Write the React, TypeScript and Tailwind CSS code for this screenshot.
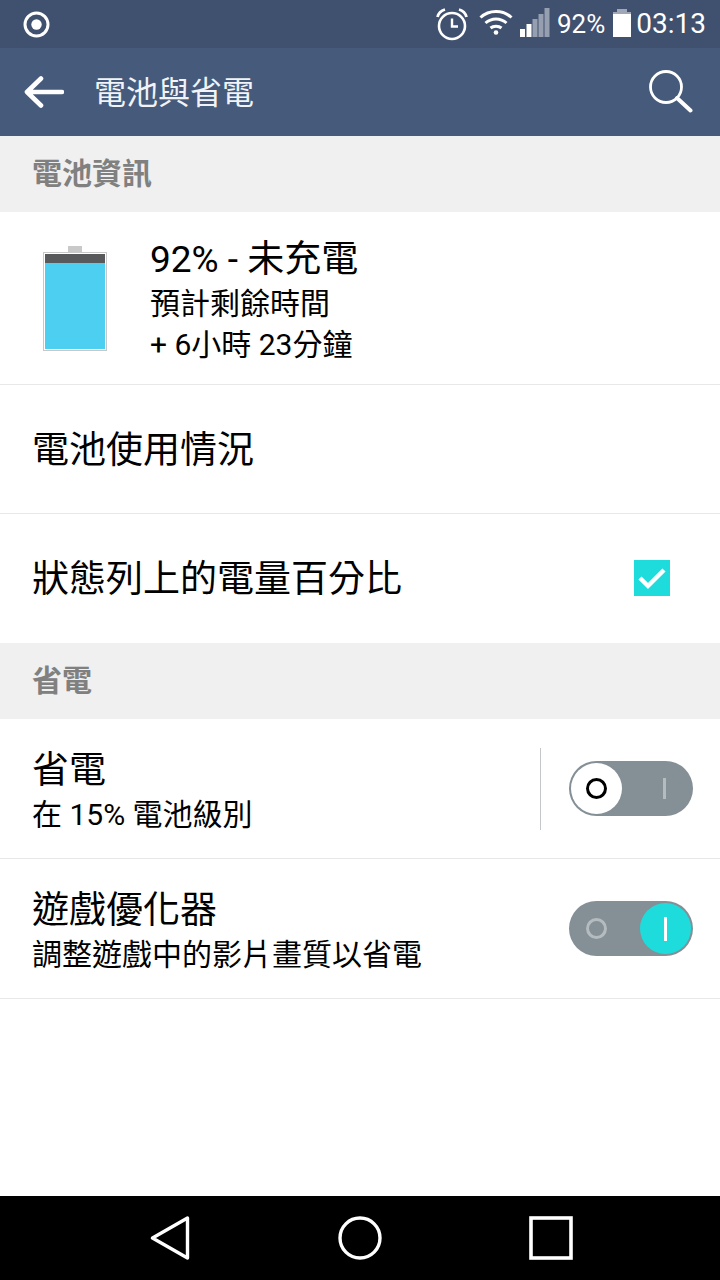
import React from "react";

const font = { fontFamily: '"Roboto","Noto Sans CJK TC",sans-serif' };

function StatusBar() {
  return (
    <div className="h-12 bg-[#40506f] flex items-center pl-[23px] pr-[14px] text-white">
      <svg width="27" height="27" viewBox="0 0 27 27"><circle cx="13.5" cy="13.5" r="11.5" fill="none" stroke="#fff" strokeWidth="3" /><circle cx="13.5" cy="13.5" r="5.2" fill="#fff" /></svg>
      <div className="flex-1" />
      <svg width="34" height="34" viewBox="0 0 34 34" className="mr-[10px]">
        <circle cx="17" cy="19" r="13" fill="none" stroke="#fff" strokeWidth="2.6" />
        <path d="M17 11.5V19.5H23" fill="none" stroke="#fff" strokeWidth="2.4" />
        <path d="M2.5 10 C3.5 6 6.5 3.5 10 2.5 M31.5 10 C30.5 6 27.5 3.5 24 2.5" fill="none" stroke="#fff" strokeWidth="2.8" />
      </svg>
      <svg width="34" height="26" viewBox="0 0 34 26" className="mr-[7px] mb-[4px]">
        <path d="M1.5 8.5 C10 0.5 24 0.5 32.5 8.5" fill="none" stroke="#fff" strokeWidth="3" />
        <path d="M6.5 14 C12.5 8.5 21.5 8.5 27.5 14" fill="none" stroke="#fff" strokeWidth="3" />
        <path d="M11.5 19 C14.5 16.5 19.5 16.5 22.5 19" fill="none" stroke="#fff" strokeWidth="3" />
        <circle cx="17" cy="23.5" r="2.3" fill="#fff" />
      </svg>
      <svg width="30" height="30" viewBox="0 0 30 30" className="mr-[7px] mb-[2px]">
        <rect x="0" y="21" width="5" height="8" fill="#fff" />
        <rect x="6.5" y="16" width="5" height="13" fill="#fff" />
        <rect x="12.5" y="11" width="5" height="18" fill="#fff" fillOpacity="0.45" />
        <rect x="18.5" y="6" width="5" height="23" fill="#fff" fillOpacity="0.45" />
        <rect x="24.5" y="0" width="5" height="29" fill="#fff" fillOpacity="0.45" />
      </svg>
      <span className="text-[26px] leading-none text-white mr-[8px]">92%</span>
      <svg width="18" height="28" viewBox="0 0 18 28" className="mr-[5px] mb-[2px]">
        <rect x="4" y="0" width="10" height="3" fill="#fff" fillOpacity="0.5" />
        <rect x="0" y="3" width="18" height="2" fill="#fff" fillOpacity="0.5" />
        <rect x="0" y="5" width="18" height="23" fill="#fff" />
      </svg>
      <span className="text-[28px] leading-none text-white">03:13</span>
    </div>
  );
}

function Header() {
  return (
    <div className="h-[88px] bg-[#465a7b] flex items-center pl-6 pr-[27px]">
      <svg width="40" height="34" viewBox="0 0 40 34">
        <path d="M38 17H4M17 3.5 3 17l14 13.5" fill="none" stroke="#fff" strokeWidth="4.6" strokeLinecap="round" strokeLinejoin="round" />
      </svg>
      <span className="ml-[30px] text-[32px] leading-none text-[#f1f3f6] flex-1 pt-[2px]">電池與省電</span>
      <svg width="46" height="46" viewBox="0 0 46 46">
        <circle cx="19" cy="18" r="15.5" fill="none" stroke="#fff" strokeWidth="2.8" />
        <path d="M30 29 43.5 41.5" fill="none" stroke="#fff" strokeWidth="4" strokeLinecap="round" />
      </svg>
    </div>
  );
}

function Section({ title }: { title: string }) {
  return (
    <div className="h-[76px] bg-[#f0f0f0] flex items-center pl-[32px] text-[#808080] text-[30px] font-bold leading-none">
      {title}
    </div>
  );
}

function Battery() {
  return (
    <div className="h-[173px] border-b border-[#e8e8e8] flex items-start pl-[43px]">
      <svg width="64" height="107" viewBox="0 0 64 107" className="mt-[33px] shrink-0">
        <rect x="25" y="1" width="14" height="6" fill="#c9c9c9" />
        <rect x="0.5" y="7.5" width="63" height="98" fill="#fff" stroke="#c8c8c8" />
        <rect x="2" y="9" width="60" height="9" fill="#58595b" />
        <rect x="2" y="18" width="60" height="86" fill="#4dcff2" />
      </svg>
      <div className="ml-[43px] mt-[27px] text-black flex flex-col">
        <span className="text-[37px] leading-[42px] h-[42px] whitespace-nowrap">92% - 未充電</span>
        <span className="text-[30px] leading-[41px] h-[41px] mt-[2px] whitespace-nowrap">預計剩餘時間</span>
        <span className="text-[30px] leading-[41px] h-[41px] whitespace-nowrap">+ 6小時 23分鐘</span>
      </div>
    </div>
  );
}

function Toggle({ on }: { on: boolean }) {
  return (
    <div className="relative w-[124px] h-[55px] rounded-full bg-[#848f96] shrink-0">
      <div className="absolute left-[17px] top-[17px] w-[21px] h-[21px] rounded-full border-[3px] border-[#b4bcc0]" />
      <div className="absolute left-[94px] top-[17px] w-[3px] h-[21px] bg-[#b4bcc0]" />
      {on ? (
        <div className="absolute left-[71px] top-[2px] w-[51px] h-[51px] rounded-full bg-[#1fdcdc] flex items-center justify-center">
          <div className="w-[3px] h-[24px] bg-white" />
        </div>
      ) : (
        <div className="absolute left-[2px] top-[2px] w-[51px] h-[51px] rounded-full bg-white flex items-center justify-center">
          <div className="w-[21px] h-[21px] rounded-full border-[3px] border-black" />
        </div>
      )}
    </div>
  );
}

function TwoLine({ title, sub, on, divider }: { title: string; sub: string; on: boolean; divider?: boolean }) {
  return (
    <div className="h-[140px] border-b border-[#e8e8e8] flex items-center pl-[32px] pr-[27px] text-black">
      <div className="flex-1 flex flex-col pt-[5px]">
        <span className="text-[37px] leading-[44px] h-[44px] whitespace-nowrap">{title}</span>
        <span className="text-[30px] leading-[38px] h-[38px] mt-[3px] whitespace-nowrap">{sub}</span>
      </div>
      {divider && <div className="w-px h-[82px] bg-[#c4c8cb] mr-[28px]" />}
      <Toggle on={on} />
    </div>
  );
}

export default function App() {
  return (
    <div className="w-[720px] h-[1280px] bg-white flex flex-col overflow-hidden" style={font}>
      <StatusBar />
      <Header />
      <Section title="電池資訊" />
      <Battery />
      <div className="h-[129px] border-b border-[#e8e8e8] flex items-center pl-[32px] pt-[2px] text-black text-[37px] leading-none">電池使用情況</div>
      <div className="h-[129px] flex items-center pl-[32px] pt-[2px] pr-[50px] text-black text-[37px] leading-none">
        <span className="flex-1">狀態列上的電量百分比</span>
        <div className="w-9 h-9 bg-[#1fdcdc] flex items-center justify-center mb-[3px]">
          <svg width="30" height="24" viewBox="0 0 30 24"><path d="M3 12 11 20 27 4" fill="none" stroke="#fff" strokeWidth="4.4" /></svg>
        </div>
      </div>
      <Section title="省電" />
      <TwoLine title="省電" sub="在 15% 電池級別" on={false} divider />
      <TwoLine title="遊戲優化器" sub="調整遊戲中的影片畫質以省電" on />
      <div className="flex-1" />
      <div className="h-[84px] bg-black flex items-center justify-between pl-[150px] pr-[147px]">
        <svg width="40" height="44" viewBox="0 0 40 44"><path d="M2.5 22 37.5 2V42Z" fill="none" stroke="#fff" strokeWidth="3.4" strokeLinejoin="round" /></svg>
        <svg width="44" height="44" viewBox="0 0 44 44"><circle cx="22" cy="22" r="20" fill="none" stroke="#fff" strokeWidth="3.4" /></svg>
        <svg width="44" height="44" viewBox="0 0 44 44"><rect x="2" y="2" width="40" height="40" fill="none" stroke="#fff" strokeWidth="3.6" /></svg>
      </div>
    </div>
  );
}
